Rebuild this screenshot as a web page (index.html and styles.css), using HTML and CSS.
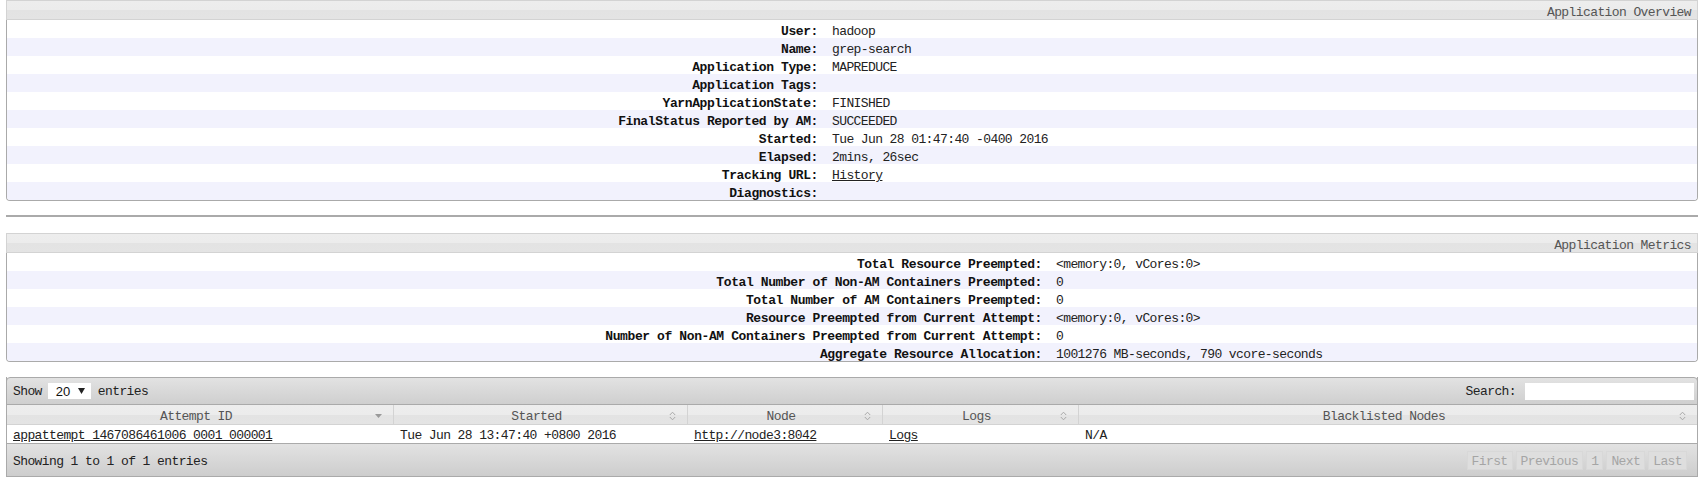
FILE: index.html
```html
<!DOCTYPE html>
<html lang="en">
<head>
<meta charset="utf-8">
<title>Application application_1467086461006_0001</title>
<link rel="stylesheet" href="styles.css">
</head>
<body>
  <section class="panel">
    <div class="panel-head">Application Overview</div>
    <div class="panel-body">
      <table class="info info-overview">
        <tr><th>User:</th><td>hadoop</td></tr>
        <tr><th>Name:</th><td>grep-search</td></tr>
        <tr><th>Application Type:</th><td>MAPREDUCE</td></tr>
        <tr><th>Application Tags:</th><td></td></tr>
        <tr><th>YarnApplicationState:</th><td>FINISHED</td></tr>
        <tr><th>FinalStatus Reported by AM:</th><td>SUCCEEDED</td></tr>
        <tr><th>Started:</th><td>Tue Jun 28 01:47:40 -0400 2016</td></tr>
        <tr><th>Elapsed:</th><td>2mins, 26sec</td></tr>
        <tr><th>Tracking URL:</th><td><a href="#">History</a></td></tr>
        <tr><th>Diagnostics:</th><td></td></tr>
      </table>
    </div>
  </section>

  <hr class="sep">

  <section class="panel">
    <div class="panel-head">Application Metrics</div>
    <div class="panel-body">
      <table class="info info-metrics">
        <tr><th>Total Resource Preempted:</th><td>&lt;memory:0, vCores:0&gt;</td></tr>
        <tr><th>Total Number of Non-AM Containers Preempted:</th><td>0</td></tr>
        <tr><th>Total Number of AM Containers Preempted:</th><td>0</td></tr>
        <tr><th>Resource Preempted from Current Attempt:</th><td>&lt;memory:0, vCores:0&gt;</td></tr>
        <tr><th>Number of Non-AM Containers Preempted from Current Attempt:</th><td>0</td></tr>
        <tr><th>Aggregate Resource Allocation:</th><td>1001276 MB-seconds, 790 vcore-seconds</td></tr>
      </table>
    </div>
  </section>

  <section class="dt">
    <div class="dt-toolbar">
      <div class="dt-length">Show <span class="dt-select"><span class="dt-select-val">20</span><svg class="dt-select-arrow" width="7" height="6" viewBox="0 0 7 6"><path d="M0 0 L7 0 L3.5 6 Z" fill="#222"/></svg></span> entries</div>
      <label class="dt-search">Search: <input type="text" class="dt-search-input"></label>
    </div>
    <table class="dt-table">
      <colgroup>
        <col class="c1"><col class="c2"><col class="c3"><col class="c4"><col class="c5">
      </colgroup>
      <thead>
        <tr>
          <th><div class="th-in"><span class="th-t">Attempt ID</span><svg class="sort" width="7" height="10" viewBox="0 0 7 10"><path d="M0 3 L7 3 L3.5 7 Z" fill="#9a9a9a"/></svg></div></th>
          <th><div class="th-in"><span class="th-t">Started</span><svg class="sort" width="7" height="10" viewBox="0 0 7 10"><path d="M0.8 4 L3.5 1.2 L6.2 4 M0.8 6 L3.5 8.8 L6.2 6" fill="none" stroke="#a8a8a8" stroke-width="1"/></svg></div></th>
          <th><div class="th-in"><span class="th-t">Node</span><svg class="sort" width="7" height="10" viewBox="0 0 7 10"><path d="M0.8 4 L3.5 1.2 L6.2 4 M0.8 6 L3.5 8.8 L6.2 6" fill="none" stroke="#a8a8a8" stroke-width="1"/></svg></div></th>
          <th><div class="th-in"><span class="th-t">Logs</span><svg class="sort" width="7" height="10" viewBox="0 0 7 10"><path d="M0.8 4 L3.5 1.2 L6.2 4 M0.8 6 L3.5 8.8 L6.2 6" fill="none" stroke="#a8a8a8" stroke-width="1"/></svg></div></th>
          <th class="last"><div class="th-in"><span class="th-t">Blacklisted Nodes</span><svg class="sort" width="7" height="10" viewBox="0 0 7 10"><path d="M0.8 4 L3.5 1.2 L6.2 4 M0.8 6 L3.5 8.8 L6.2 6" fill="none" stroke="#a8a8a8" stroke-width="1"/></svg></div></th>
        </tr>
      </thead>
      <tbody>
        <tr>
          <td><a href="#">appattempt_1467086461006_0001_000001</a></td>
          <td>Tue Jun 28 13:47:40 +0800 2016</td>
          <td><a href="#">http://node3:8042</a></td>
          <td><a href="#">Logs</a></td>
          <td>N/A</td>
        </tr>
      </tbody>
    </table>
    <div class="dt-footer">
      <div class="dt-info">Showing 1 to 1 of 1 entries</div>
      <div class="dt-paging">
        <span class="pg-btn">First</span>
        <span class="pg-btn">Previous</span>
        <span class="pg-btn">1</span>
        <span class="pg-btn">Next</span>
        <span class="pg-btn">Last</span>
      </div>
    </div>
  </section>
</body>
</html>
```

FILE: styles.css
```css
html {
  overflow: hidden;
}

body {
  margin: 0 0 0 6px;
  font-family: "Liberation Mono", "DejaVu Sans Mono", monospace;
  font-size: 13px;
  letter-spacing: -0.6px;
  color: #222;
  background: #fff;
  overflow: hidden;
}

a {
  color: #222;
  text-decoration: underline;
}

/* ---------- info panels ---------- */
.panel-head {
  height: 13px;
  line-height: 13px;
  padding: 5px 6px 0 0;
  border: 1px solid #d3d3d3;
  background: linear-gradient(#ededed 0, #ececec 50%, #e3e3e3 50%, #e4e4e4 100%);
  color: #555;
  text-align: right;
}

.panel-body {
  border: 1px solid #aaa;
  border-top: 0;
  border-radius: 0 0 4px 4px;
  overflow: hidden;
}

.info {
  width: 100%;
  border-collapse: collapse;
  border-spacing: 0;
}

.info th,
.info td {
  box-sizing: border-box;
  height: 18px;
  line-height: 13px;
  padding: 5px 0 0;
  white-space: nowrap;
  vertical-align: top;
}

.info th {
  text-align: right;
  font-weight: bold;
  color: #111;
  letter-spacing: -0.4px;
  padding-right: 7px;
}

.info td {
  text-align: left;
  padding-left: 7px;
  color: #222;
}

.info tr:nth-child(even) {
  background: #f2f2fd;
}

.info-overview th {
  width: 818px;
}

.info-metrics th {
  width: 1042px;
}

.sep {
  border: 0;
  border-top: 2px solid #aaa;
  height: 0;
  margin: 14px 0 16px;
}

/* ---------- data table ---------- */
.dt {
  margin-top: 15px;
  border-left: 1px solid #aaa;
  border-right: 1px solid #aaa;
}

.dt-toolbar {
  box-sizing: border-box;
  height: 28px;
  margin: 0 -1px;
  border: 1px solid #aaa;
  border-radius: 4px 4px 0 0;
  background: linear-gradient(#e2e2e2, #cfcfcf);
  display: flex;
  align-items: center;
  justify-content: space-between;
  padding: 1px 3px 0 6px;
  color: #222;
}

.dt-length {
  display: flex;
  align-items: center;
  gap: 6px;
}

.dt-select {
  display: inline-flex;
  align-items: center;
  box-sizing: border-box;
  width: 43px;
  height: 16px;
  background: #fff;
  padding-left: 8px;
  margin: -1px 1px 0 0;
}

.dt-select-val {
  font-family: "Liberation Sans", Arial, sans-serif;
  font-size: 13px;
  letter-spacing: 0;
  color: #111;
}

.dt-select-arrow {
  display: block;
  margin-left: 8px;
}

.dt-search {
  display: flex;
  align-items: center;
  gap: 9px;
}

.dt-search-input {
  box-sizing: border-box;
  width: 169px;
  height: 17px;
  border: 0;
  margin: -1px 0 0;
  padding: 0 2px;
  background: #fff;
  font: inherit;
}

.dt-table {
  width: 100%;
  table-layout: fixed;
  border-collapse: separate;
  border-spacing: 0;
}

.dt-table col.c1 { width: 387px; }
.dt-table col.c2 { width: 294px; }
.dt-table col.c3 { width: 195px; }
.dt-table col.c4 { width: 196px; }
.dt-table col.c5 { width: 618px; }

.dt-table th {
  box-sizing: border-box;
  height: 20px;
  padding: 3px 11px 0 10px;
  font-weight: normal;
  color: #555;
  background: linear-gradient(#ededed 0, #ececec 50%, #e3e3e3 50%, #e4e4e4 100%);
  border-right: 1px solid #d3d3d3;
  border-bottom: 1px solid #d3d3d3;
}

.dt-table th.last {
  border-right: 0;
}

.th-in {
  display: flex;
  align-items: center;
}

.th-t {
  flex: 1;
  text-align: center;
  white-space: nowrap;
}

.sort {
  flex: none;
  display: block;
}

.dt-table td {
  box-sizing: border-box;
  height: 18px;
  line-height: 14px;
  padding: 4px 0 0 6px;
  background: #fff;
  white-space: nowrap;
  overflow: hidden;
  vertical-align: top;
}

.dt-footer {
  box-sizing: border-box;
  height: 34px;
  margin: 0 -1px;
  border: 1px solid #aaa;
  background: linear-gradient(#e2e2e2, #cdcdcd);
  display: flex;
  align-items: center;
  justify-content: space-between;
  padding: 3px 10px 0 6px;
}

.dt-paging {
  display: flex;
  gap: 3px;
  margin-top: -2px;
}

.pg-btn {
  box-sizing: border-box;
  height: 19px;
  line-height: 15px;
  padding: 2px 4px 0;
  border: 1px solid #d8d8d8;
  background: #dedede;
  color: #a5a5a5;
}
```
